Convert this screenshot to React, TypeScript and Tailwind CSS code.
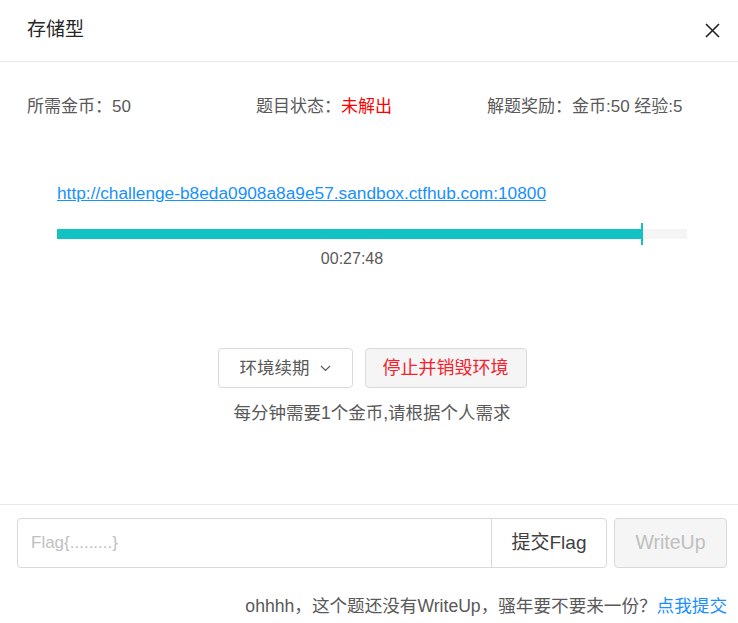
export default function App() {
  return (
    <div
      className="w-[738px] h-[623px] bg-white text-[#595959] overflow-hidden"
      style={{ fontFamily: '"Liberation Sans", "Noto Sans CJK SC", sans-serif' }}
    >
      {/* 标题 */}
      <div className="h-[62px] flex items-center justify-between pl-[27px] pr-[18px] border-b border-[#e8e8e8]">
        <span className="text-[19px] text-[#262626]">存储型</span>
        <svg width="15" height="15" viewBox="0 0 15 15" className="text-[#222]">
          <path d="M1 1L14 14M14 1L1 14" stroke="currentColor" strokeWidth="1.6" />
        </svg>
      </div>

      {/* 信息 */}
      <div className="grid grid-cols-[229px_231px_1fr] pl-[27px] mt-[32px] text-[17px] leading-[26px]">
        <div>所需金币：50</div>
        <div>
          题目状态：<span className="text-[#ff0000]">未解出</span>
        </div>
        <div>解题奖励：金币:50 经验:5</div>
      </div>

      {/* 环境 */}
      <div className="pl-[57px] pr-[51px] mt-[62px]">
        <a href="#" className="text-[17.3px] leading-[22px] text-[#1890ff] underline">
          http://challenge-b8eda0908a8a9e57.sandbox.ctfhub.com:10800
        </a>
        <div className="relative mt-[23px] h-[10px] bg-[#f5f5f5]">
          <div className="h-full bg-[#13c2c2]" style={{ width: '92.7%' }} />
          <div className="absolute top-[-6px] left-[584px] w-[2px] h-[22px] bg-[#13c2c2]" />
        </div>
      </div>
      <div className="pl-[17px] pr-[51px] text-center mt-[9px] text-[16px] leading-[22px]">00:27:48</div>

      {/* 按钮 */}
      <div className="flex justify-center gap-[12px] mt-[78px] pl-[6px]">
        <button className="h-[40px] w-[135px] rounded border border-[#d9d9d9] bg-white text-[17.5px] text-[#595959] flex items-center justify-center gap-[10px]">
          环境续期
          <svg width="11" height="7" viewBox="0 0 11 7">
            <path d="M1 1L5.5 5.5L10 1" stroke="#595959" strokeWidth="1.2" fill="none" />
          </svg>
        </button>
        <button className="h-[40px] w-[162px] rounded border border-[#d9d9d9] bg-[#f5f5f5] text-[18px] text-[#f5222d]">
          停止并销毁环境
        </button>
      </div>
      <div className="text-center mt-[12px] pl-[6px] text-[17.5px] leading-[26px]">每分钟需要1个金币,请根据个人需求</div>

      {/* Flag 提交 */}
      <div className="mt-[78px] border-t border-[#e8e8e8] pt-[13px] px-[17px] pr-[11px]">
        <div className="flex gap-[7px]">
          <div className="flex flex-1 h-[50px] rounded border border-[#d9d9d9]">
            <input
              placeholder="Flag{.........}"
              className="flex-1 px-[13px] text-[17px] outline-none placeholder:text-[#bfbfbf] bg-transparent"
            />
            <button className="w-[115px] border-l border-[#d9d9d9] text-[19px] text-[#404040]">提交Flag</button>
          </div>
          <button className="w-[113px] h-[50px] rounded border border-[#d9d9d9] bg-[#f5f5f5] text-[19.5px] text-[#bfbfbf]">
            WriteUp
          </button>
        </div>
        <div className="text-right mt-[27px] text-[17.6px] leading-[22px]">
          ohhhh，这个题还没有WriteUp，骚年要不要来一份？<span className="text-[#1890ff]">点我提交</span>
        </div>
      </div>
    </div>
  );
}
